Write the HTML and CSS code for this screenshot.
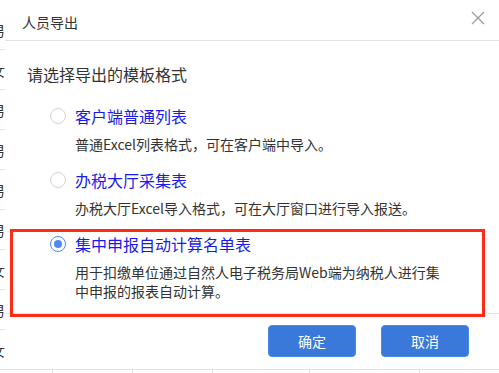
FILE: index.html
```html
<!DOCTYPE html>
<html lang="zh-CN">
<head>
<meta charset="utf-8">
<title>人员导出</title>
<link rel="stylesheet" href="styles.css">
</head>
<body>
<div class="bg">
  <div class="bg-row"><span class="bg-cell">男</span></div>
  <div class="bg-row"><span class="bg-cell">女</span></div>
  <div class="bg-row"><span class="bg-cell">男</span></div>
  <div class="bg-row"><span class="bg-cell">男</span></div>
  <div class="bg-row"><span class="bg-cell">男</span></div>
  <div class="bg-row"><span class="bg-cell">男</span></div>
  <div class="bg-row"><span class="bg-cell">女</span></div>
  <div class="bg-row"><span class="bg-cell">男</span></div>
  <div class="bg-row"><span class="bg-cell">女</span></div>
  <div class="bg-cols">
    <span class="col c1"></span><span class="col c2"></span><span class="col c3"></span><span class="col c4"></span><span class="col c5"></span>
  </div>
</div>

<div class="modal">
  <div class="modal-header">
    <span class="title">人员导出</span>
    <svg class="close" width="14" height="14" viewBox="0 0 14 14"><path d="M1 1 L13 13 M13 1 L1 13" stroke="#9a9a9a" stroke-width="1.2" fill="none"/></svg>
  </div>
  <div class="modal-body">
    <div class="heading">请选择导出的模板格式</div>
    <div class="option">
      <div class="option-line"><span class="radio"></span><span class="label">客户端普通列表</span></div>
      <div class="desc">普通Excel列表格式，可在客户端中导入。</div>
    </div>
    <div class="option">
      <div class="option-line"><span class="radio"></span><span class="label">办税大厅采集表</span></div>
      <div class="desc">办税大厅Excel导入格式，可在大厅窗口进行导入报送。</div>
    </div>
    <div class="option">
      <div class="option-line"><span class="radio checked"></span><span class="label">集中申报自动计算名单表</span></div>
      <div class="desc">用于扣缴单位通过自然人电子税务局Web端为纳税人进行集中申报的报表自动计算。</div>
    </div>
  </div>
  <div class="modal-footer">
    <button class="btn">确定</button>
    <button class="btn">取消</button>
  </div>
</div>

<div class="highlight"></div>
</body>
</html>
```

FILE: styles.css
```css
html, body {
  margin: 0;
  padding: 0;
  background: #ffffff;
  overflow: hidden;
  width: 499px;
  height: 373px;
  font-family: "Noto Sans CJK SC", "Noto Sans", sans-serif;
}

.bg {
  padding-top: 10px;
  display: flex;
  flex-direction: column;
}

.bg-row {
  height: 39px;
  border-bottom: 1px solid #e2e2e2;
  display: flex;
  align-items: center;
}

.bg-cell {
  font-size: 14px;
  color: #333;
  margin-left: -9px;
  line-height: 20px;
}

.bg-cols {
  display: flex;
  height: 6px;
}

.col {
  border-right: 1px solid #dcdcdc;
  flex: none;
}
.c1 { width: 52px; }
.c2 { width: 79px; }
.c3 { width: 79px; }
.c4 { width: 96px; }
.c5 { width: 109px; }

.modal {
  position: absolute;
  left: 5px;
  top: 0;
  width: 500px;
  height: 369px;
  background: #ffffff;
  display: flex;
  flex-direction: column;
}

.modal-header {
  height: 40px;
  border-bottom: 1px solid #e3e3e3;
  display: flex;
  justify-content: space-between;
  padding: 0 20px 0 17px;
  flex: none;
}

.title {
  font-size: 14px;
  color: #333;
  line-height: 40px;
  padding-top: 2px;
}

.close {
  margin-top: 11px;
}

.modal-body {
  height: 272px;
  box-sizing: border-box;
  padding: 21px 0 0 22px;
  flex: none;
}

.heading {
  font-size: 16px;
  line-height: 24px;
  color: #333;
  margin-bottom: 18px;
}

.option {
  margin-left: 23px;
  margin-bottom: 14px;
}

.option-line {
  display: flex;
  align-items: center;
  height: 24px;
  gap: 9px;
}

.radio {
  width: 16px;
  height: 16px;
  box-sizing: border-box;
  border: 1px solid #d3d3d3;
  border-radius: 50%;
  background: #fff;
  flex: none;
  display: flex;
  align-items: center;
  justify-content: center;
}

.radio.checked {
  border-color: #4b8cf3;
}

.radio.checked::after {
  content: "";
  width: 8px;
  height: 8px;
  border-radius: 50%;
  background: #4b8cf3;
}

.label {
  font-size: 16px;
  line-height: 24px;
  color: #1a1aee;
}

.desc {
  margin-top: 7px;
  padding-left: 25px;
  width: 375px;
  font-size: 14px;
  line-height: 19px;
  color: #333;
}

.modal-footer {
  border-top: 1px solid #e6e6e6;
  padding: 11px 36px 0 0;
  display: flex;
  justify-content: flex-end;
  gap: 25px;
}

.btn {
  width: 88px;
  height: 32px;
  border: 1px solid #4a88e6;
  border-radius: 4px;
  background: #3a79d9;
  color: #ffffff;
  font-family: "Noto Sans CJK SC", "Noto Sans", sans-serif;
  font-size: 14px;
  padding: 0;
}

.highlight {
  position: absolute;
  left: 10px;
  top: 229px;
  width: 475px;
  height: 88px;
  box-sizing: border-box;
  border: 3px solid #ff2b15;
}
```
